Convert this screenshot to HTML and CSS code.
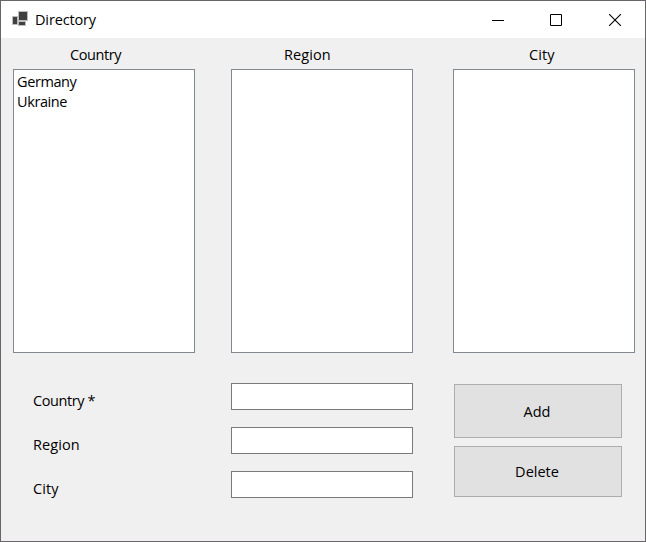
FILE: index.html
```html
<!DOCTYPE html>
<html lang="en">
<head>
<meta charset="utf-8">
<title>Directory</title>
<link rel="stylesheet" href="styles.css">
</head>
<body>
<div class="window">
  <header class="titlebar">
    <svg class="app-icon" width="18" height="16" viewBox="0 0 18 16" shape-rendering="crispEdges">
      <path fill="#bdbdbd" d="M6 0h10v10H6zM0 5h6v9H0zM6 10h8v5H6z"/>
      <path fill="#404040" d="M7 1h8v8H7zM1 6h4v7H1zM7 11h6v3H7z"/>
    </svg>
    <h1 class="title">Directory</h1>
    <div class="controls">
      <svg class="minimize" width="12" height="12" viewBox="0 0 12 12"><path d="M0 6.5h12" stroke="#000"/></svg>
      <svg width="12" height="12" viewBox="0 0 12 12"><path d="M.5.5h11v11H.5z" stroke="#000" fill="none"/></svg>
      <svg width="12" height="12" viewBox="0 0 12 12"><path d="M0 0l12 12M12 0L0 12" stroke="#000" stroke-width="1.1"/></svg>
    </div>
  </header>
  <main class="client">
    <div class="lists">
      <section><h2 class="list-title country">Country</h2><ul class="listbox"><li>Germany</li><li>Ukraine</li></ul></section>
      <section><h2 class="list-title region wide">Region</h2><ul class="listbox"></ul></section>
      <section><h2 class="list-title city wide">City</h2><ul class="listbox"></ul></section>
    </div>
    <div class="editor">
      <div class="fields">
        <label class="field"><span>Country *</span><input type="text"></label>
        <label class="field"><span class="wide">Region</span><input type="text"></label>
        <label class="field"><span class="wide">City</span><input type="text"></label>
      </div>
      <div class="actions">
        <button class="add">Add</button>
        <button class="delete">Delete</button>
      </div>
    </div>
  </main>
</div>
</body>
</html>
```
FILE: styles.css
```css
* { box-sizing: border-box; margin: 0; padding: 0; }
body, button, input {
  font: 14.5px/20px "Open Sans", "Noto Sans", sans-serif;
  letter-spacing: -0.4px;
  color: #000;
}
.window {
  display: flex;
  flex-direction: column;
  width: 646px;
  height: 542px;
  border: 1px solid #69646a;
  background: #f0f0f0;
  overflow: hidden;
}
.titlebar {
  display: flex;
  align-items: center;
  height: 37px;
  padding: 0 24px 0 11px;
  background: #fff;
}
.app-icon { margin: 0 5px 2px 0; }
.title, .list-title { font-size: inherit; font-weight: 400; }
.title { letter-spacing: -0.15px; }
.controls { display: flex; gap: 47px; margin-left: auto; }
.controls svg { display: block; }
.controls .minimize { margin-right: -1px; }
.client { padding: 7px 10px 0 12px; }
.lists { display: grid; grid-template-columns: 218px 222px 182px; }
.list-title { height: 24px; }
.country { padding-left: 57px; }
.region { padding-left: 53px; }
.city { padding-left: 76px; }
.wide { letter-spacing: 0.1px; }
.listbox {
  width: 182px;
  height: 284px;
  padding: 2px 3px;
  border: 1px solid #828790;
  background: #fff;
  list-style: none;
}
.editor { display: flex; gap: 41px; padding: 30px 0 0 20px; }
.fields { display: flex; flex-direction: column; gap: 17px; }
.field { display: grid; grid-template-columns: 198px 182px; height: 27px; }
.field span { padding-top: 8px; }
.field input { height: 27px; border: 1px solid #7a7a7a; background: #fff; }
.actions { display: flex; flex-direction: column; gap: 8px; padding-top: 1px; }
.actions button {
  width: 168px;
  border: 1px solid #adadad;
  background: #e1e1e1;
  padding-right: 2px;
  letter-spacing: 0;
}
.add { height: 54px; padding-top: 2px; }
.delete { height: 51px; }
```
